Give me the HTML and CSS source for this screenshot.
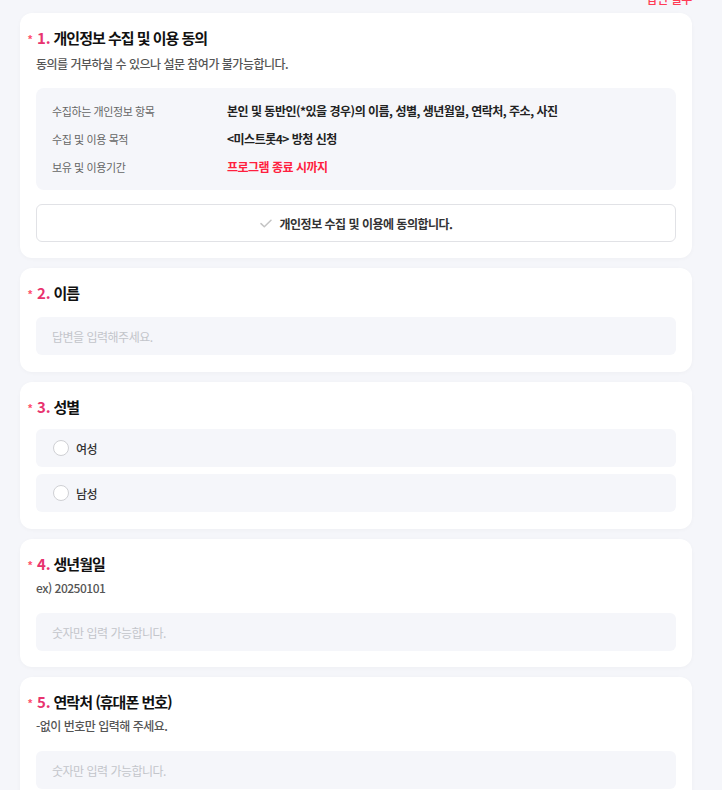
FILE: index.html
```html
<!DOCTYPE html>
<html lang="ko">
<head>
<meta charset="utf-8">
<link rel="stylesheet" href="styles.css">
</head>
<body>
<div class="page">
  <div class="req-note">* 답변 필수</div>

  <section class="card">
    <h2 class="q-title"><span class="star">*</span><span class="num">1.</span> 개인정보 수집 및 이용 동의</h2>
    <p class="q-desc first">동의를 거부하실 수 있으나 설문 참여가 불가능합니다.</p>
    <div class="info-box">
      <div class="info-row"><span class="info-label">수집하는 개인정보 항목</span><span class="info-value">본인 및 동반인(*있을 경우)의 이름, 성별, 생년월일, 연락처, 주소, 사진</span></div>
      <div class="info-row"><span class="info-label">수집 및 이용 목적</span><span class="info-value">&lt;미스트롯4&gt; 방청 신청</span></div>
      <div class="info-row"><span class="info-label">보유 및 이용기간</span><span class="info-value red">프로그램 종료 시까지</span></div>
    </div>
    <button class="agree-btn" type="button">
      <svg class="check" width="12" height="9" viewBox="0 0 12 9"><path d="M1 4.6 L4.3 7.8 L11 1.2" fill="none" stroke="#c4c4c4" stroke-width="1.5" stroke-linecap="round" stroke-linejoin="round"/></svg>
      <span>개인정보 수집 및 이용에 동의합니다.</span>
    </button>
  </section>

  <section class="card card-tall">
    <h2 class="q-title"><span class="star">*</span><span class="num">2.</span> 이름</h2>
    <div class="input">답변을 입력해주세요.</div>
  </section>

  <section class="card card-options">
    <h2 class="q-title"><span class="star">*</span><span class="num">3.</span> 성별</h2>
    <div class="options">
      <div class="option"><span class="radio"></span><span>여성</span></div>
      <div class="option"><span class="radio"></span><span>남성</span></div>
    </div>
  </section>

  <section class="card">
    <h2 class="q-title"><span class="star">*</span><span class="num">4.</span> 생년월일</h2>
    <p class="q-desc">ex) 20250101</p>
    <div class="input after-desc">숫자만 입력 가능합니다.</div>
  </section>

  <section class="card">
    <h2 class="q-title"><span class="star">*</span><span class="num">5.</span> 연락처 (휴대폰 번호)</h2>
    <p class="q-desc">-없이 번호만 입력해 주세요.</p>
    <div class="input after-desc">숫자만 입력 가능합니다.</div>
  </section>
</div>
</body>
</html>
```

FILE: styles.css
```css
* { box-sizing: border-box; }
html, body {
  margin: 0;
  padding: 0;
  background: #f5f6fa;
  font-family: "Noto Sans CJK KR", "Noto Sans", sans-serif;
  color: #222;
  overflow: hidden;
}
.page {
  width: 672px;
  margin-left: 20px;
  display: flex;
  flex-direction: column;
  gap: 10px;
}
.req-note {
  margin-top: -9px;
  margin-bottom: -4px;
  text-align: right;
  font-size: 12px;
  line-height: 16px;
  color: #ff3b55;
  font-weight: 500;
  letter-spacing: -0.4px;
}
.card {
  background: #fff;
  border-radius: 12px;
  padding: 14px 16px 16px;
  box-shadow: 0 1px 4px rgba(0, 0, 0, 0.03);
  display: flex;
  flex-direction: column;
}
.card-tall {
  padding-bottom: 17px;
}
.card-options {
  padding-bottom: 17px;
}
.q-title {
  position: relative;
  margin: 0;
  font-size: 15px;
  line-height: 22px;
  font-weight: 700;
  color: #111;
  letter-spacing: -1px;
}
.star {
  position: absolute;
  left: -8px;
  top: 1px;
  font-family: "Liberation Sans", sans-serif;
  font-size: 11px;
  color: #ff4d6a;
  font-weight: 700;
  letter-spacing: 0;
}
.num {
  color: #e8336f;
  margin-left: 1px;
  letter-spacing: -0.2px;
}
.q-desc {
  margin: 3px 0 0;
  font-size: 12px;
  line-height: 20px;
  color: #555;
  font-weight: 500;
  letter-spacing: -0.5px;
}
.q-desc.first { margin-top: 5px; }
.info-box {
  margin-top: 14px;
  background: #f5f6fa;
  border-radius: 8px;
  padding: 13px 16px 13px;
  display: flex;
  flex-direction: column;
  gap: 8px;
}
.info-row {
  display: flex;
  line-height: 20px;
}
.info-label {
  width: 175px;
  flex: none;
  font-size: 11px;
  color: #666;
  letter-spacing: -0.4px;
}
.info-value {
  font-size: 12px;
  font-weight: 700;
  color: #222;
  letter-spacing: -0.5px;
}
.info-value.red { color: #ff1f3f; }
.agree-btn {
  margin-top: 14px;
  height: 38px;
  border: 1px solid #e1e2e6;
  border-radius: 6px;
  background: #fff;
  display: flex;
  align-items: center;
  justify-content: center;
  gap: 8px;
  font-family: inherit;
  font-size: 12px;
  font-weight: 700;
  color: #333;
  letter-spacing: -0.5px;
  padding: 0;
}
.input {
  margin-top: 13px;
  height: 38px;
  background: #f5f6fa;
  border-radius: 6px;
  padding: 0 16px;
  display: flex;
  align-items: center;
  font-size: 12px;
  color: #c3c5ca;
  letter-spacing: -0.5px;
}
.input.after-desc { margin-top: 15px; }
.options {
  margin-top: 11px;
  display: flex;
  flex-direction: column;
  gap: 7px;
}
.option {
  height: 38px;
  background: #f5f6fa;
  border-radius: 6px;
  padding: 0 17px;
  display: flex;
  align-items: center;
  gap: 7px;
  font-size: 12px;
  font-weight: 500;
  color: #333;
  letter-spacing: -0.5px;
}
.radio {
  width: 16px;
  height: 16px;
  border-radius: 50%;
  border: 1px solid #cfd0d4;
  background: #fff;
  flex: none;
}
```
